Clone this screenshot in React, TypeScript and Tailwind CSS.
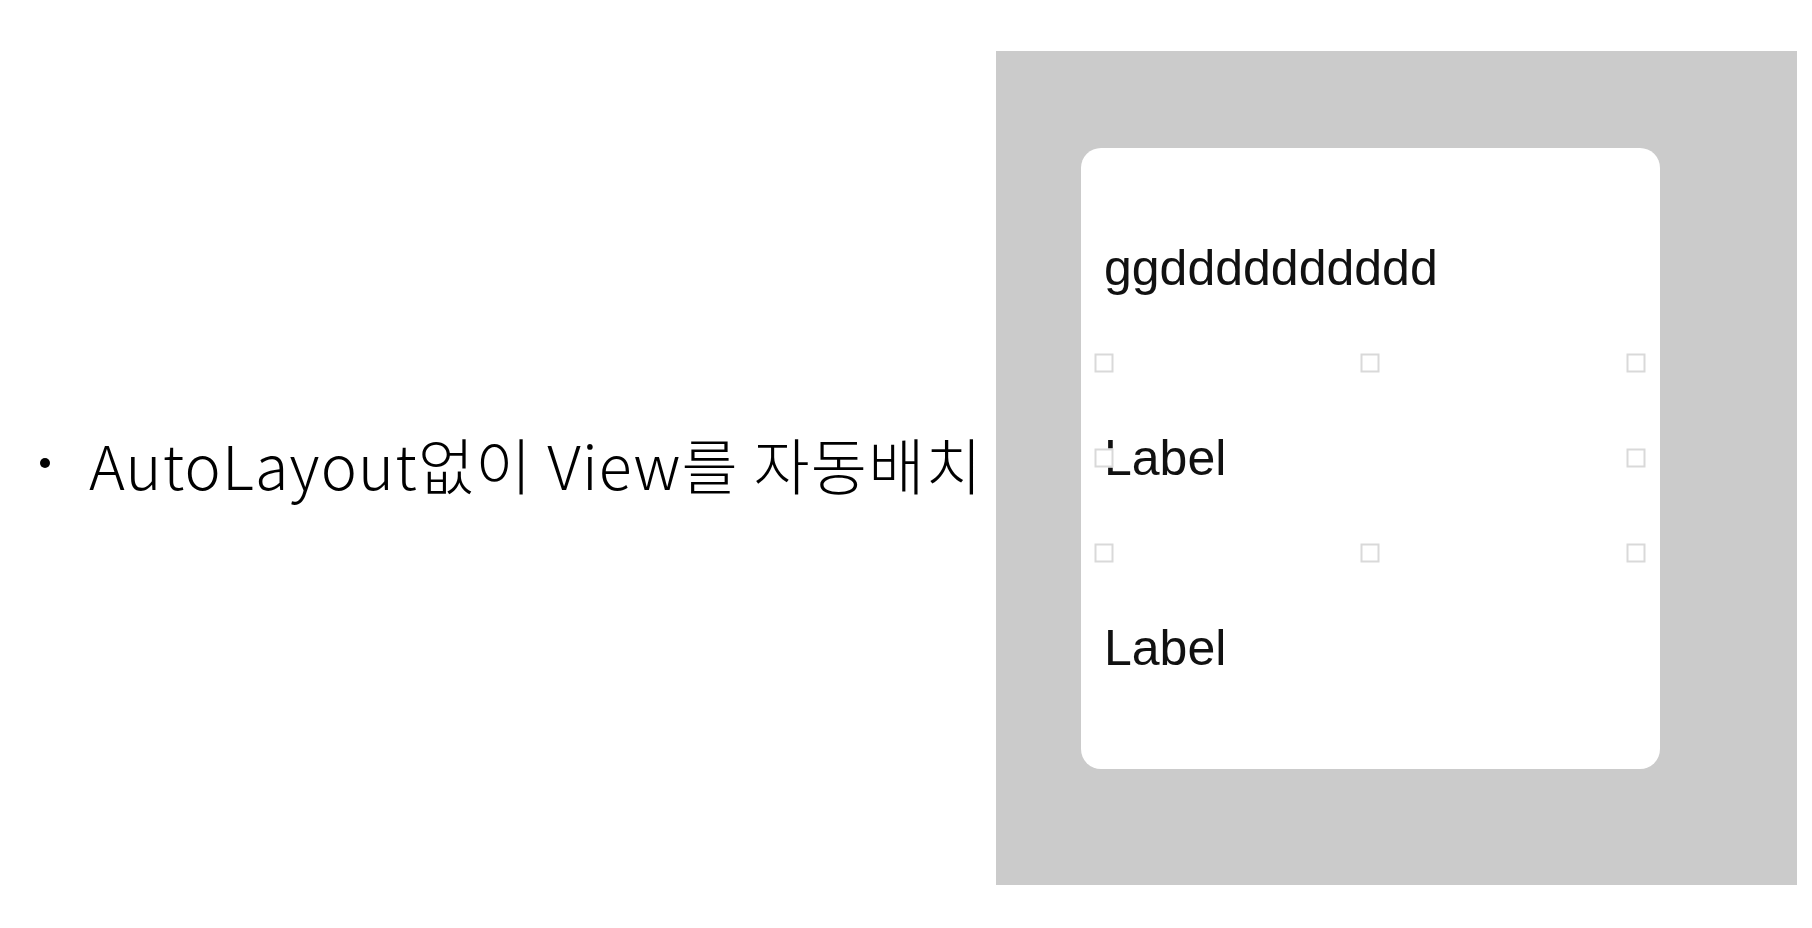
import React from "react";

const handles = [
  "left-0 top-0",
  "left-1/2 top-0",
  "left-full top-0",
  "left-0 top-1/2",
  "left-full top-1/2",
  "left-0 top-full",
  "left-1/2 top-full",
  "left-full top-full",
];

function Handle({ pos }: { pos: string }) {
  return (
    <span
      className={`absolute ${pos} -translate-x-1/2 -translate-y-1/2 w-[19px] h-[19px] bg-white border-2 border-[#d9d9d9]`}
    />
  );
}

function Row({ text, selected }: { text: string; selected?: boolean }) {
  return (
    <div className="relative h-[190px] flex items-center">
      <span className="text-[50px] leading-none text-[#111]">{text}</span>
      {selected && handles.map((h) => <Handle key={h} pos={h} />)}
    </div>
  );
}

export default function App() {
  return (
    <div className="w-[1812px] h-[928px] flex bg-white overflow-hidden">
      <div className="flex-1 flex items-center pl-[40px] pb-[2px] font-['Noto_Sans_CJK_KR',sans-serif]">
        <span className="w-[10px] h-[10px] rounded-full bg-black" />
        <span className="ml-[39px] text-[61px] leading-none tracking-[1.2px] font-light text-black whitespace-nowrap">
          AutoLayout없이 View를 자동배치
        </span>
      </div>

      <div className="mt-[51px] mr-[15px] w-[801px] h-[834px] bg-[#cbcbcb] pl-[85px] pt-[97px]">
        <div className="w-[579px] h-[621px] bg-white rounded-[20px] pl-[23px] pr-[24px] pt-[25px] font-['Liberation_Sans',Arial,sans-serif]">
          <Row text="ggdddddddddd" />
          <Row text="Label" selected />
          <Row text="Label" />
        </div>
      </div>
    </div>
  );
}
